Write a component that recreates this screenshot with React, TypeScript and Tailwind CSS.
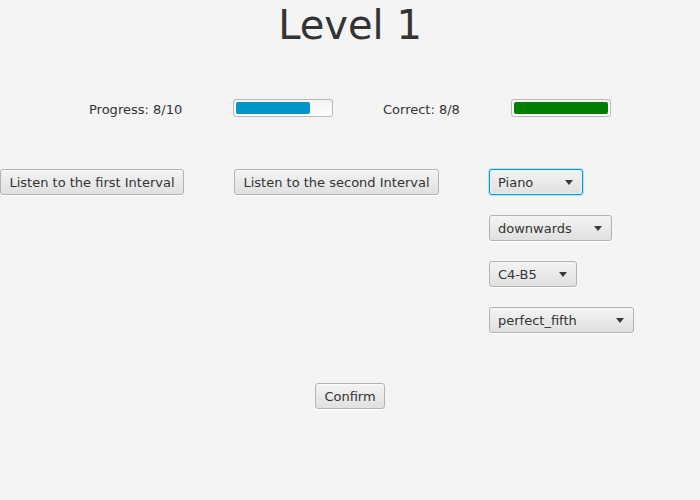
import React from "react";

const font = { fontFamily: "'DejaVu Sans', 'Liberation Sans', sans-serif" };

function Btn({ label, w }: { label: string; w: number }) {
  return (
    <div
      className="h-[26px] pt-[1px] flex items-center justify-center rounded-[3px] border border-[#b3b3b3] bg-gradient-to-b from-[#f4f4f4] to-[#e0e0e0] text-[13px] text-[#333] shadow-[0_1px_0_#ffffff,inset_0_1px_0_#fafafa]"
      style={{ width: w }}
    >
      {label}
    </div>
  );
}

function Combo({ label, w, focused }: { label: string; w: number; focused?: boolean }) {
  return (
    <div
      className={
        "h-[26px] pt-[1px] flex items-center justify-between pl-[8px] pr-[9px] rounded-[3px] border bg-gradient-to-b from-[#f4f4f4] to-[#e0e0e0] text-[13px] text-[#333] " +
        (focused
          ? "border-[#039ed3] shadow-[0_0_0_1px_rgba(3,158,211,0.25),inset_0_0_0_1px_#dff3fa]"
          : "border-[#b3b3b3] shadow-[0_1px_0_#ffffff]")
      }
      style={{ width: w }}
    >
      <span>{label}</span>
      <svg width="8" height="5" viewBox="0 0 8 5">
        <path d="M0 0 L8 0 L4 5 Z" fill="#3a3a3a" />
      </svg>
    </div>
  );
}

export default function App() {
  return (
    <div className="w-[700px] h-[500px] bg-[#f4f4f4] flex flex-col text-[#333]" style={font}>
      <div className="mt-[5px] h-[40px] text-center text-[40px] leading-[40px] text-[#333]">Level 1</div>

      <div className="mt-[54px] flex items-center h-[18px]">
        <div className="ml-[89px] w-[144px] pt-[4px] text-[13px]">Progress: 8/10</div>
        <div className="w-[100px] h-[18px] rounded-[3px] border border-[#b8b8b8] bg-gradient-to-b from-[#f3f3f3] to-[#ffffff] p-[2px]">
          <div className="h-full w-[74px] rounded-[2px] bg-[#0096c9]" />
        </div>
        <div className="ml-[50px] w-[128px] pt-[4px] text-[13px]">Correct: 8/8</div>
        <div className="w-[100px] h-[18px] rounded-[3px] border border-[#b8b8b8] bg-gradient-to-b from-[#f3f3f3] to-[#ffffff] p-[2px]">
          <div className="h-full w-full rounded-[2px] bg-[#008000]" />
        </div>
      </div>

      <div className="mt-[52px] flex items-start">
        <Btn label="Listen to the first Interval" w={184} />
        <div className="ml-[50px]">
          <Btn label="Listen to the second Interval" w={205} />
        </div>
        <div className="ml-[50px] flex flex-col gap-[20px]">
          <Combo label="Piano" w={94} focused />
          <Combo label="downwards" w={123} />
          <Combo label="C4-B5" w={88} />
          <Combo label="perfect_fifth" w={145} />
        </div>
      </div>

      <div className="mt-[50px] flex justify-center">
        <Btn label="Confirm" w={70} />
      </div>
    </div>
  );
}
